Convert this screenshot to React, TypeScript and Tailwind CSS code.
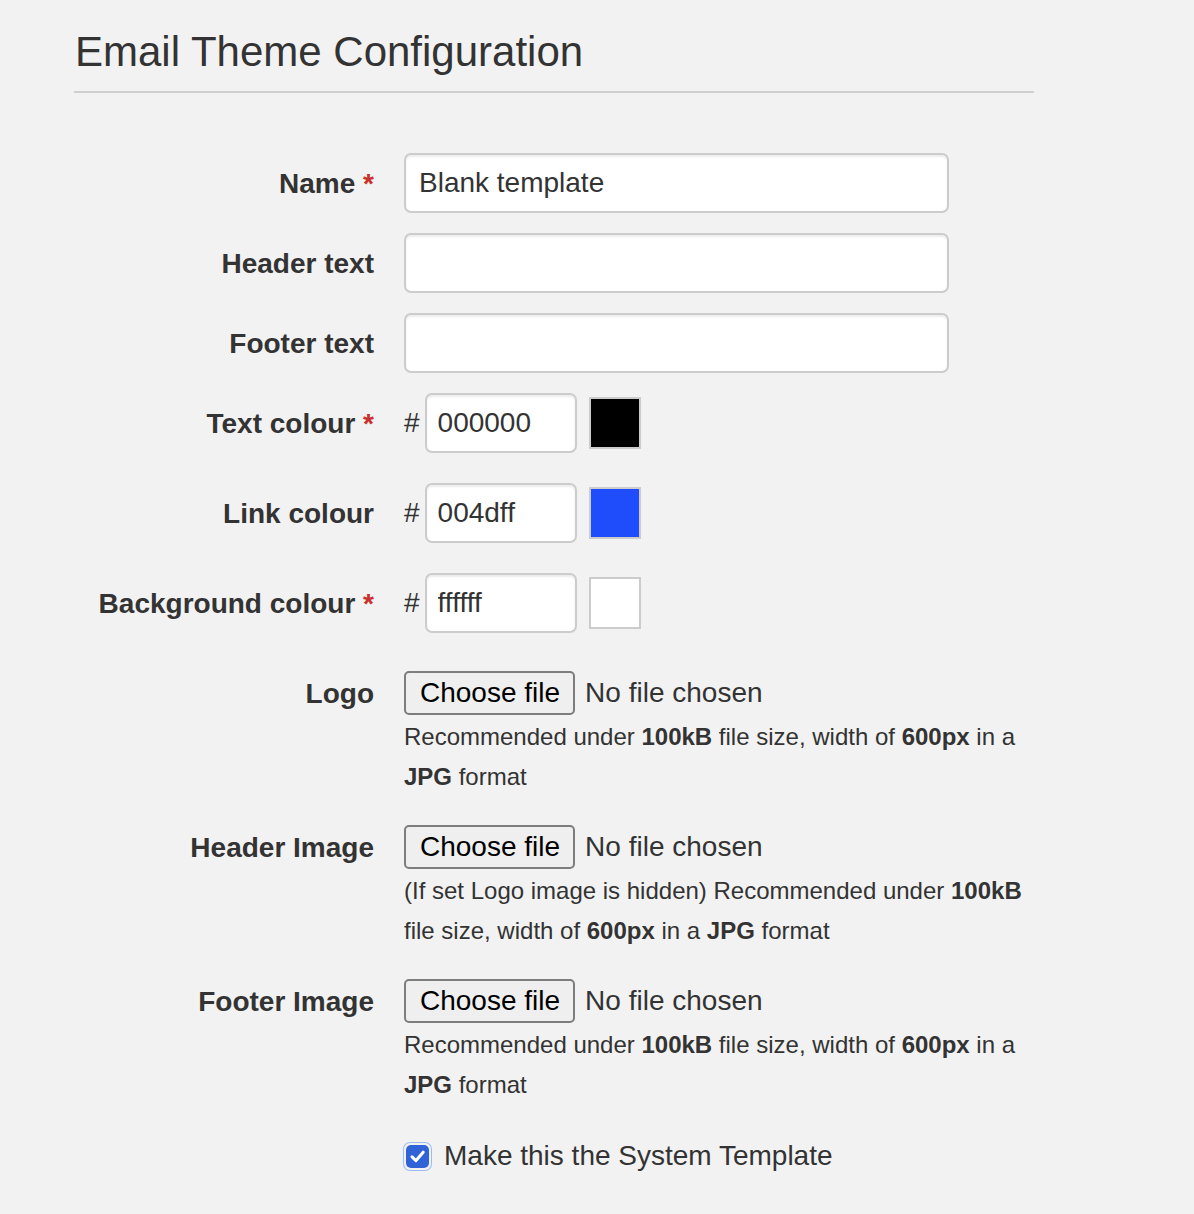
import React from "react";

function Req() {
  return <span className="text-[#c9302c]"> *</span>;
}

function TextRow({ label, value, required, className }: { label: string; value?: string; required?: boolean; className?: string }) {
  return (
    <div className={"flex items-center gap-[30px] " + (className || "")}>
      <label className="w-[300px] text-right font-bold text-[28px] leading-[40px] pt-[1px]">
        {label}
        {required && <Req />}
      </label>
      <input
        readOnly
        value={value || ""}
        className="w-[545px] h-[60px] bg-white border-2 border-[#cccccc] rounded-[7px] pl-[13px] text-[28px] text-[#333] shadow-[inset_0_2px_2px_rgba(0,0,0,0.075)] outline-none font-['Liberation_Sans',Arial,sans-serif]"
      />
    </div>
  );
}

function ColorRow({ label, value, color, required, className }: { label: string; value: string; color: string; required?: boolean; className?: string }) {
  return (
    <div className={"flex items-center gap-[30px] " + (className || "")}>
      <label className="w-[300px] text-right font-bold text-[28px] leading-[40px] pt-[1px]">
        {label}
        {required && <Req />}
      </label>
      <div className="flex items-center">
        <span className="text-[28px] leading-[40px]">#</span>
        <input
          readOnly
          value={value}
          className="ml-[5px] w-[152px] h-[60px] bg-white border-2 border-[#cccccc] rounded-[7px] pl-[11px] text-[28px] text-[#333] shadow-[inset_0_2px_2px_rgba(0,0,0,0.075)] outline-none font-['Liberation_Sans',Arial,sans-serif]"
        />
        <span className="ml-[12px] w-[52px] h-[52px] border-2 border-[#cccccc]" style={{ backgroundColor: color }} />
      </div>
    </div>
  );
}

function FileRow({ label, help, className }: { label: string; help: React.ReactNode; className?: string }) {
  return (
    <div className={"flex items-start gap-[30px] " + (className || "")}>
      <div className="w-[300px] h-[44px] flex items-center justify-end">
        <label className="font-bold text-[28px] leading-[40px] pt-[1px]">{label}</label>
      </div>
      <div className="w-[630px]">
        <div className="flex items-center h-[44px]">
          <span className="h-[44px] pl-[14px] pr-[13px] flex items-center border-2 border-[#7d7d7d] rounded-[5px] bg-[#efefef] text-black text-[28px]">
            Choose file
          </span>
          <span className="ml-[10px] text-[28px]">No file chosen</span>
        </div>
        <p className="mt-[2px] text-[24px] leading-[40px]">{help}</p>
      </div>
    </div>
  );
}

export default function App() {
  return (
    <div className="min-h-[1214px] bg-[#f2f2f2] text-[#333333] font-['Liberation_Sans',Arial,sans-serif]">
      <div className="w-[960px] ml-[74px] pt-[22px]">
        <h1 className="text-[42px] leading-[60px] pb-[9px] pl-[1px] border-b-2 border-[#cfcfcf]">
          Email Theme Configuration
        </h1>
        <form className="mt-[60px] flex flex-col">
          <TextRow label="Name" value="Blank template" required />
          <TextRow label="Header text" className="mt-[20px]" />
          <TextRow label="Footer text" className="mt-[20px]" />
          <ColorRow label="Text colour" value="000000" color="#000000" required className="mt-[20px]" />
          <ColorRow label="Link colour" value="004dff" color="#1f4dfb" className="mt-[30px]" />
          <ColorRow label="Background colour" value="ffffff" color="#ffffff" required className="mt-[30px]" />
          <FileRow
            label="Logo"
            className="mt-[38px]"
            help={
              <>
                Recommended under <b>100kB</b> file size, width of <b>600px</b> in a <b>JPG</b> format
              </>
            }
          />
          <FileRow
            label="Header Image"
            className="mt-[28px]"
            help={
              <>
                (If set Logo image is hidden) Recommended under <b>100kB</b> file size, width of <b>600px</b> in a{" "}
                <b>JPG</b> format
              </>
            }
          />
          <FileRow
            label="Footer Image"
            className="mt-[28px]"
            help={
              <>
                Recommended under <b>100kB</b> file size, width of <b>600px</b> in a <b>JPG</b> format
              </>
            }
          />
          <div className="mt-[31px] flex items-center gap-[30px] pb-[40px]">
            <div className="w-[300px]" />
            <div className="flex items-center h-[40px]">
              <span className="w-[27px] h-[27px] rounded-[6px] shadow-[0_0_0_1px_#9cbcf2] flex items-center justify-center">
                <span className="w-[23px] h-[23px] rounded-[5px] bg-[#2f63d6] flex items-center justify-center">
                  <svg width="17" height="17" viewBox="0 0 17 17">
                    <path d="M3 8.8 L7 12.6 L14.2 4.2" fill="none" stroke="white" strokeWidth="3" strokeLinecap="round" strokeLinejoin="round" />
                  </svg>
                </span>
              </span>
              <span className="ml-[13px] text-[28px] leading-[40px]">Make this the System Template</span>
            </div>
          </div>
        </form>
      </div>
    </div>
  );
}
